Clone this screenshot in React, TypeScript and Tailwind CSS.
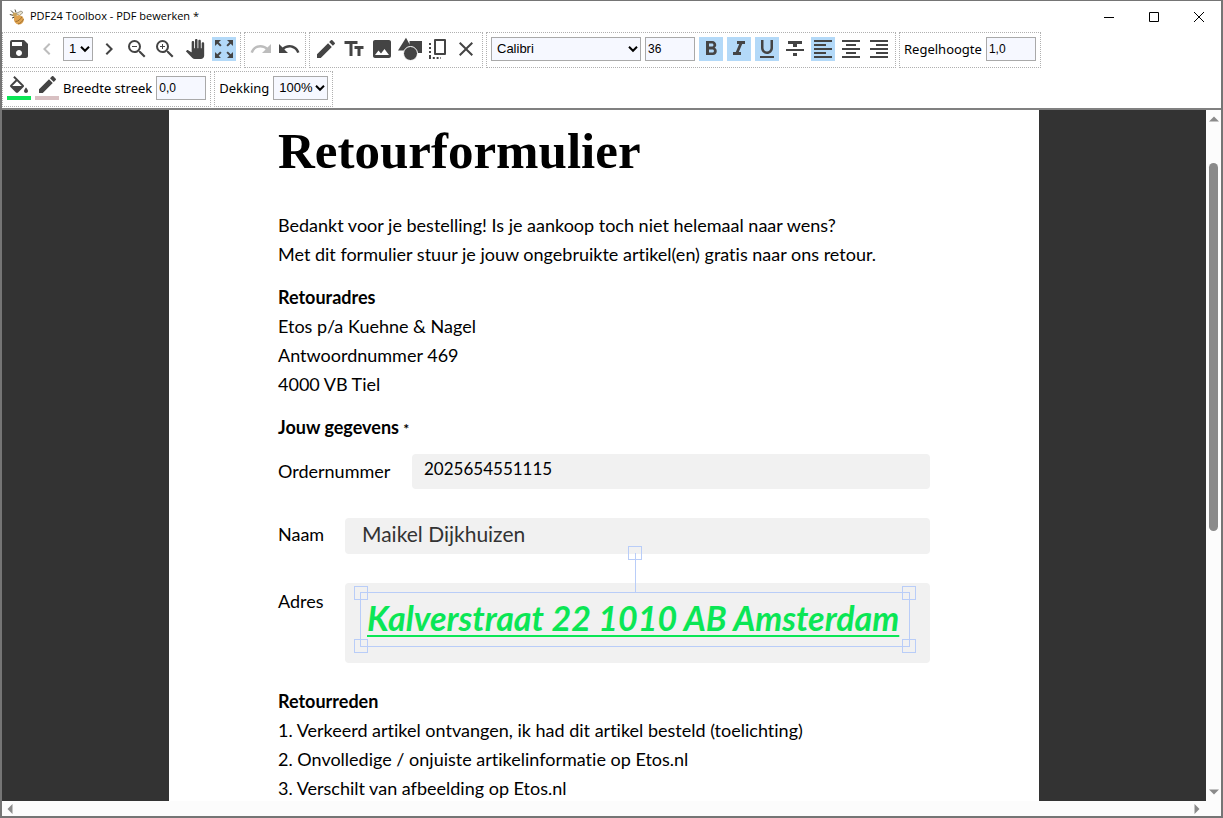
import { useState, type ReactNode } from 'react'
import {
  MdSave, MdChevronLeft, MdChevronRight, MdZoomOut, MdZoomIn, MdPanTool, MdZoomOutMap, MdRedo, MdUndo,
  MdEdit, MdTextFields, MdImage, MdClose, MdFormatBold, MdFormatItalic, MdFormatUnderlined,
  MdFormatStrikethrough, MdFormatAlignLeft, MdFormatAlignCenter, MdFormatAlignRight,
} from 'react-icons/md'

const FIELD = 'h-6 border border-[#a9a9a9] bg-[#f6f8ff] text-black font-["Liberation_Sans"] outline-none'

const RETOURADRES = ['Etos p/a Kuehne & Nagel', 'Antwoordnummer 469', '4000 VB Tiel']

const REDENEN = [
  '1. Verkeerd artikel ontvangen, ik had dit artikel besteld (toelichting)',
  '2. Onvolledige / onjuiste artikelinformatie op Etos.nl',
  '3. Verschilt van afbeelding op Etos.nl',
]

interface ToolProps {
  label: string
  children: ReactNode
  active?: boolean
  disabled?: boolean
  wide?: boolean
  onClick?: () => void
}

function Tool({ label, children, active, disabled, wide, onClick }: ToolProps) {
  return (
    <button
      type="button"
      aria-label={label}
      title={label}
      disabled={disabled}
      onClick={onClick}
      className={`flex h-6 shrink-0 items-center justify-center ${wide ? 'w-[27px]' : 'w-6'} ${
        active ? 'bg-[#b3d9f8]' : ''
      } ${disabled ? 'text-[#bdbdbd]' : 'text-[#444]'}`}
    >
      {children}
    </button>
  )
}

function Group({ children }: { children: ReactNode }) {
  return (
    <div className="flex h-9 shrink-0 items-center gap-1 border border-dotted border-[#b0b0b0] px-1 pb-0.5">
      {children}
    </div>
  )
}

interface SelectProps {
  id: string
  label: string
  options: string[]
  className: string
}

function Select({ id, label, options, className }: SelectProps) {
  return (
    <span className={`relative flex text-[13px] ${className}`}>
      <select id={id} aria-label={label} className={`${FIELD} w-full appearance-none pl-[5px]`}>
        {options.map(o => (
          <option key={o}>{o}</option>
        ))}
      </select>
      <svg viewBox="0 0 10 8" className="pointer-events-none absolute top-2 right-[3px] h-2 w-2.5" fill="none" stroke="#000" strokeWidth="2">
        <path d="M1 1.8 5 5.8 9 1.8" />
      </svg>
    </span>
  )
}

function Logo() {
  return (
    <svg viewBox="0 0 16 16" className="h-4 w-4">
      <path d="M2 1.500l3 3M6 .5l1 3M.8 5.500l4 1M3 9l3-1" stroke="#4a4336" strokeWidth="1" />
      <path d="M7 4.500l5-2.500 2 1.500-3.500 3z" fill="#e9e2cc" stroke="#6b6550" strokeWidth=".6" />
      <circle cx="5.800" cy="5.800" r="2.200" fill="#c9a25b" />
      <path d="M5 9c1-2.500 4-3 6-2.500s4 2 3.800 4.500-2.300 4.500-5 4.500S4.200 12 5 9z" fill="#e0a350" />
      <path d="M6.500 12.500c2.500 0 5-2 6.500-5M9 15c2.500-.5 4.500-2.500 5.500-5" stroke="#8a6227" strokeWidth=".8" fill="none" />
    </svg>
  )
}

function Handle({ className }: { className: string }) {
  return <span className={`absolute size-3.5 border border-[#b9cdf8] ${className}`} />
}

function ScrollArrow({ d }: { d: string }) {
  return (
    <svg viewBox="0 0 10 10" className="size-2.5" fill="#8a8a8a">
      <path d={d} />
    </svg>
  )
}

export default function App() {
  const [hand, setHand] = useState(false)
  const [fit, setFit] = useState(true)
  const [bold, setBold] = useState(true)
  const [italic, setItalic] = useState(true)
  const [underline, setUnderline] = useState(true)
  const [strike, setStrike] = useState(false)
  const [align, setAlign] = useState('left')

  return (
    <div className="flex h-screen flex-col overflow-hidden border-2 border-t border-[#757575] bg-white text-black">
      {/* Title bar */}
      <header className="flex h-[31px] shrink-0 items-center pl-[7px] font-['Open_Sans']">
        <Logo />
        <h1 className="ml-[5px] text-[11px]">PDF24 Toolbox - PDF bewerken *</h1>
        <div className="ml-auto flex">
          <button type="button" aria-label="Minimaliseren" className="flex h-7 w-[45px] items-center justify-center">
            <svg viewBox="0 0 10 10" className="size-2.5" stroke="#000"><path d="M0 5.500h10" /></svg>
          </button>
          <button type="button" aria-label="Maximaliseren" className="flex h-7 w-[45px] items-center justify-center">
            <svg viewBox="0 0 10 10" className="size-2.5" fill="none" stroke="#000"><path d="M.5.5h9v9h-9z" /></svg>
          </button>
          <button type="button" aria-label="Sluiten" className="flex h-7 w-[45px] items-center justify-center">
            <svg viewBox="0 0 10 10" className="size-2.5" stroke="#000"><path d="M0 0l10 10M10 0L0 10" /></svg>
          </button>
        </div>
      </header>

      {/* Toolbar */}
      <div className="flex shrink-0 flex-col gap-[3px] border-b-2 border-[#808080] pb-px font-['Noto_Sans'] text-[13px]">
        <div className="flex gap-[3px]">
          <Group>
            <Tool label="Opslaan"><MdSave size={24} /></Tool>
            <Tool label="Vorige pagina" disabled><MdChevronLeft size={24} /></Tool>
            <Select id="pagina" label="Pagina" options={['1', '2']} className="w-[30px]" />
            <Tool label="Volgende pagina"><MdChevronRight size={24} /></Tool>
            <Tool label="Uitzoomen"><MdZoomOut size={24} /></Tool>
            <Tool label="Inzoomen"><MdZoomIn size={24} /></Tool>
            <Tool label="Verplaatsen" wide active={hand} onClick={() => setHand(!hand)}><MdPanTool size={20} /></Tool>
            <Tool label="Volledige pagina" active={fit} onClick={() => setFit(!fit)}><MdZoomOutMap size={24} /></Tool>
          </Group>
          <Group>
            <Tool label="Opnieuw" disabled><MdRedo size={24} /></Tool>
            <Tool label="Ongedaan maken"><MdUndo size={24} /></Tool>
          </Group>
          <Group>
            <Tool label="Tekenen"><MdEdit size={24} /></Tool>
            <Tool label="Tekst"><MdTextFields size={24} /></Tool>
            <Tool label="Afbeelding"><MdImage size={24} /></Tool>
            <Tool label="Vormen">
              <svg viewBox="0 0 24 24" className="size-6" fill="currentColor">
                <path d="M8 .8 15 13.500H0z" />
                <path d="M11.500 4H24v12H11.500z" />
                <circle cx="12.500" cy="16.500" r="7" stroke="#fff" strokeWidth="1" />
              </svg>
            </Tool>
            <Tool label="Naar voorgrond">
              <svg viewBox="0 0 24 24" className="size-6" fill="none" stroke="currentColor" strokeWidth="2">
                <path d="M9 3h10v14H9z" strokeLinejoin="round" />
                <path d="M4 6v16" strokeDasharray="2 2" />
                <path d="M3 21h12" strokeDasharray="2 1.800" />
              </svg>
            </Tool>
            <Tool label="Verwijderen"><MdClose size={24} /></Tool>
          </Group>
          <Group>
            <Select id="lettertype" label="Lettertype" options={['Calibri', 'Arial', 'Times New Roman']} className="w-[150px]" />
            <input aria-label="Lettergrootte" defaultValue="36" className={`${FIELD} w-[50px] px-0.5 text-xs`} />
            <Tool label="Vet" active={bold} onClick={() => setBold(!bold)}><MdFormatBold size={24} /></Tool>
            <Tool label="Cursief" active={italic} onClick={() => setItalic(!italic)}><MdFormatItalic size={24} /></Tool>
            <Tool label="Onderstrepen" active={underline} onClick={() => setUnderline(!underline)}><MdFormatUnderlined size={24} /></Tool>
            <Tool label="Doorhalen" active={strike} onClick={() => setStrike(!strike)}><MdFormatStrikethrough size={24} /></Tool>
            <Tool label="Links uitlijnen" active={align === 'left'} onClick={() => setAlign('left')}><MdFormatAlignLeft size={24} /></Tool>
            <Tool label="Centreren" active={align === 'center'} onClick={() => setAlign('center')}><MdFormatAlignCenter size={24} /></Tool>
            <Tool label="Rechts uitlijnen" active={align === 'right'} onClick={() => setAlign('right')}><MdFormatAlignRight size={24} /></Tool>
          </Group>
          <Group>
            <label htmlFor="regelhoogte" className="pt-0.5">Regelhoogte</label>
            <input id="regelhoogte" defaultValue="1,0" className={`${FIELD} w-[50px] px-0.5 text-xs`} />
          </Group>
        </div>
        <div className="flex gap-[3px]">
          <Group>
            <Tool label="Vulkleur">
              <svg viewBox="0 0 24 24" className="size-6" fill="currentColor">
                <path d="M16.560 8.940 7.620 0 6.210 1.410l2.380 2.380-5.150 5.150a1.490 1.490 0 0 0 0 2.120l5.500 5.500c.29.29.68.44 1.060.44s.77-.15 1.060-.44l5.500-5.500c.59-.58.59-1.530 0-2.120zM5.210 10 10 5.210 14.790 10zM19 11.500s-2 2.170-2 3.500c0 1.100.9 2 2 2s2-.9 2-2c0-1.330-2-3.500-2-3.500z" />
                <path d="M0 20h24v4H0z" fill="#0be655" />
              </svg>
            </Tool>
            <Tool label="Lijnkleur">
              <svg viewBox="0 0 24 24" className="size-6" fill="currentColor">
                <path d="M17.750 7 14 3.250l-10 10V17h3.750l10-10zm2.960-2.960a1 1 0 0 0 0-1.410L18.370.29a1 1 0 0 0-1.410 0L15 2.250 18.750 6l1.960-1.960z" />
                <path d="M0 20h24v4H0z" fill="#d8c0c2" />
              </svg>
            </Tool>
            <label htmlFor="breedte" className="pt-0.5">Breedte streek</label>
            <input id="breedte" defaultValue="0,0" className={`${FIELD} w-[50px] px-0.5 text-xs`} />
          </Group>
          <Group>
            <label htmlFor="dekking" className="pt-0.5">Dekking</label>
            <Select id="dekking" label="Dekking" options={['100%', '75%', '50%', '25%']} className="w-[55px]" />
          </Group>
        </div>
      </div>

      {/* Document */}
      <div className="flex min-h-0 flex-1">
        <main className="min-w-0 flex-1 overflow-hidden bg-[#333]">
          <article className="mx-auto max-w-[870px] bg-white px-[109px] pt-[11px] font-['Lato'] text-lg/[29px] [font-variant-ligatures:none]">
            <h2 className="font-['Liberation_Serif'] text-[51px]/[60px] font-bold">Retourformulier</h2>
            <p className="mt-[30px]">
              Bedankt voor je bestelling! Is je aankoop toch niet helemaal naar wens?
              <br />
              Met dit formulier stuur je jouw ongebruikte artikel(en) gratis naar ons retour.
            </p>

            <h3 className="mt-3.5 font-bold">Retouradres</h3>
            {RETOURADRES.map(r => (
              <p key={r}>{r}</p>
            ))}

            <h3 className="mt-3.5 font-bold">
              Jouw gegevens <span className="text-sm">*</span>
            </h3>
            <div className="mt-3 flex flex-col gap-[29px]">
              <div className="flex items-center">
                <label htmlFor="ordernummer" className="w-[134px] shrink-0">Ordernummer</label>
                <input
                  id="ordernummer"
                  defaultValue="2025654551115"
                  className="h-[35px] min-w-0 flex-1 rounded bg-[#f1f1f1] px-3 pb-1.5 text-[17px] outline-none"
                />
              </div>
              <div className="flex">
                <label htmlFor="naam" className="mt-0.5 w-[67px] shrink-0">Naam</label>
                <input
                  id="naam"
                  defaultValue="Maikel Dijkhuizen"
                  className="h-9 min-w-0 flex-1 rounded bg-[#f1f1f1] px-[17px] pb-1.5 text-[21px] text-[#333] outline-none"
                />
              </div>
              <div className="flex">
                <label htmlFor="adres" className="mt-1 w-[67px] shrink-0">Adres</label>
                <div className="relative h-20 min-w-0 flex-1 rounded bg-[#f1f1f1]">
                  {/* Selected text box with resize and rotate handles */}
                  <div className="absolute top-[9px] right-5 left-[15px] h-[55px] border border-[#b9cdf8]">
                    <input
                      id="adres"
                      defaultValue="Kalverstraat 22 1010 AB Amsterdam"
                      className={`h-full w-full px-1.5 pb-1 text-[34px] text-[#0be655] decoration-2 underline-offset-4 outline-none ${
                        bold ? 'font-bold' : ''
                      } ${italic ? 'italic' : ''} ${underline ? 'underline' : ''}`}
                    />
                    <span className="absolute -top-10 left-1/2 h-10 w-px bg-[#b9cdf8]" />
                    <Handle className="-top-[47px] left-1/2 -translate-x-1/2" />
                    <Handle className="-top-[7px] -left-[7px]" />
                    <Handle className="-top-[7px] -right-[7px]" />
                    <Handle className="-bottom-[7px] -left-[7px]" />
                    <Handle className="-right-[7px] -bottom-[7px]" />
                  </div>
                </div>
              </div>
            </div>

            <h3 className="mt-6 font-bold">Retourreden</h3>
            {REDENEN.map(r => (
              <p key={r}>{r}</p>
            ))}
          </article>
        </main>
        <div className="flex w-[15px] shrink-0 flex-col items-center bg-[#fcfcfc] py-1">
          <ScrollArrow d="M0 7.500 5 2.500l5 5z" />
          <div className="flex min-h-0 w-full flex-1 flex-col items-center pt-[39px]">
            <div className="h-[59%] w-[9px] rounded-full bg-[#8a8a8a]" />
          </div>
          <ScrollArrow d="M0 2.500 5 7.500l5-5z" />
        </div>
      </div>
      <div className="flex h-[15px] shrink-0 items-center justify-between bg-[#fcfcfc] pr-[19px] pl-[3px]">
        <ScrollArrow d="M7.500 0 2.500 5l5 5z" />
        <ScrollArrow d="M2.500 0 7.500 5l-5 5z" />
      </div>
    </div>
  )
}
